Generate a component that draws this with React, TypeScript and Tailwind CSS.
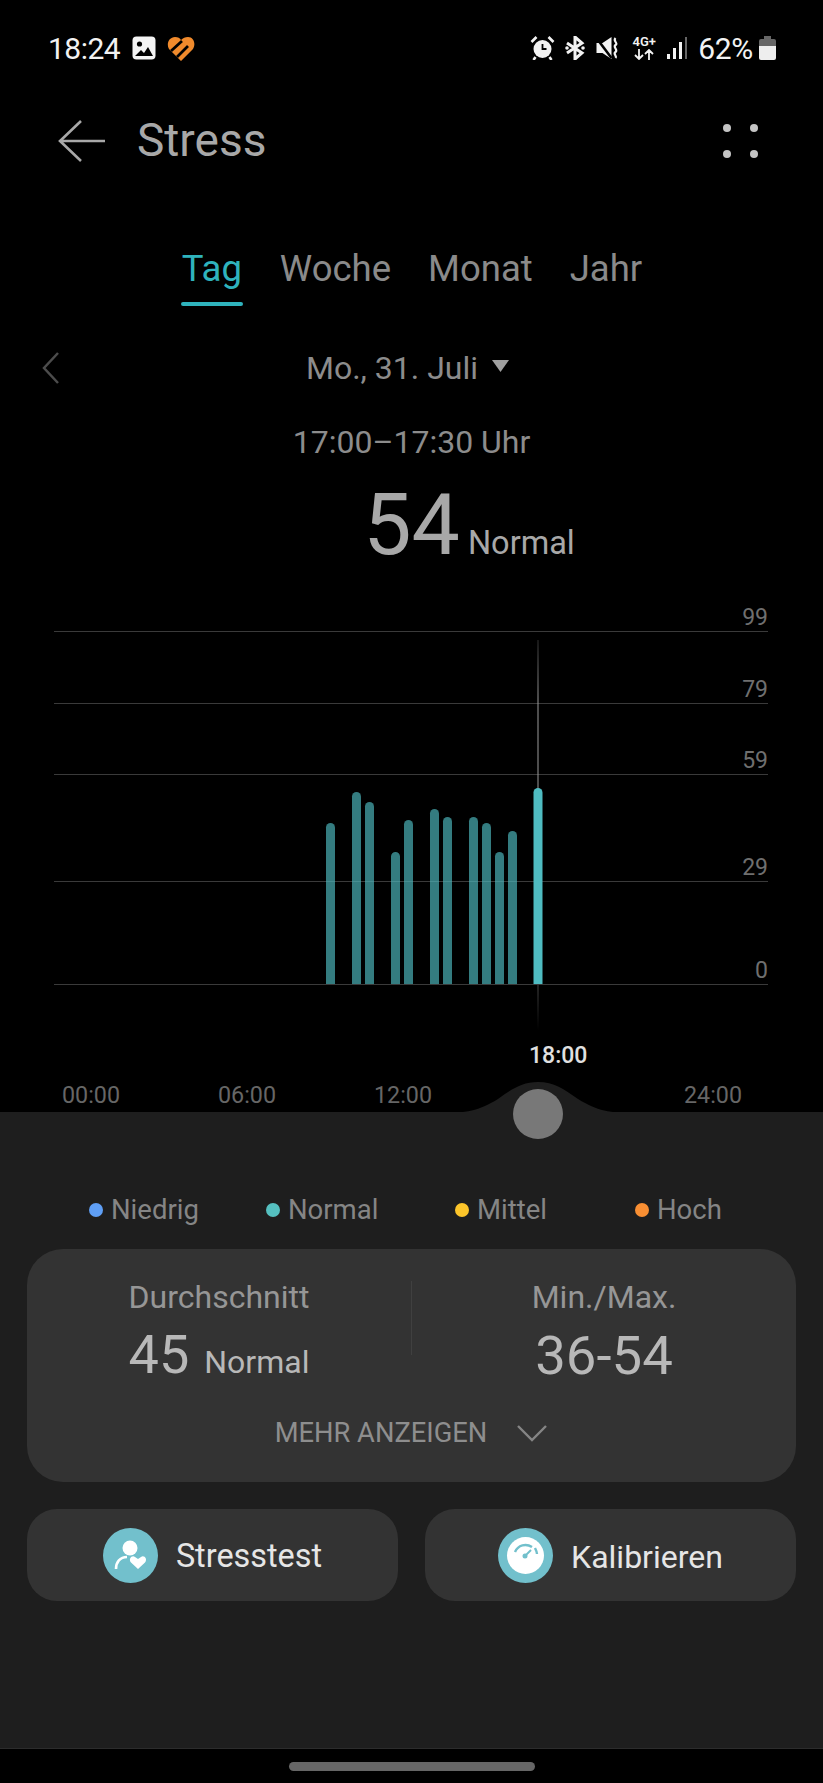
const barTops = [
  { x: 330.5, top: 823 },
  { x: 356.5, top: 792 },
  { x: 369.5, top: 802 },
  { x: 395.5, top: 852 },
  { x: 408.5, top: 820 },
  { x: 434.5, top: 809 },
  { x: 447.5, top: 817 },
  { x: 473.5, top: 817 },
  { x: 486.5, top: 823 },
  { x: 499.5, top: 852 },
  { x: 512.5, top: 831 },
];

const gridLines = [
  { y: 631, label: "99" },
  { y: 703, label: "79" },
  { y: 774, label: "59" },
  { y: 881, label: "29" },
  { y: 984, label: "0" },
];

const legend = [
  { label: "Niedrig", dot: "bg-[#5f9ff5]", cls: "left-[89px]" },
  { label: "Normal", dot: "bg-[#55c0c0]", cls: "left-[266px]" },
  { label: "Mittel", dot: "bg-[#fcc52a]", cls: "left-[455px]" },
  { label: "Hoch", dot: "bg-[#f98f33]", cls: "left-[635px]" },
];

function StatusBar() {
  return (
    <div className="flex h-[96px] items-center justify-between pl-[48px] pr-[47px] text-[30px] text-[#f2f2f2]">
      <div className="flex items-center">
        <span className="tracking-[-0.5px]">18:24</span>
        <svg width="24" height="24" viewBox="0 0 24 24" className="ml-[12px]">
          <rect x="0.5" y="0.5" width="23" height="23" rx="4" fill="#f4f4f4" />
          <circle cx="7.500" cy="8" r="2.600" fill="#000" />
          <path d="M3 20l6-6 3 3 4-6 5 9z" fill="#000" />
        </svg>
        <svg width="28" height="25" viewBox="0 0 28 25" className="ml-[11px]">
          <path
            d="M14 25L2 13C-1 8 2 1 8 1c3 0 5 1 6 3 2-2 4-3 7-3 6 0 8 7 5 12z"
            fill="#f08a2c"
          />
          <path d="M4 15L15 5M10 21L21 10" stroke="#000" strokeWidth="2.800" />
        </svg>
      </div>
      <div className="flex items-center">
        <svg width="25" height="24" viewBox="0 0 24 24" className="ml-[1px]">
          <circle cx="12" cy="13" r="9" fill="#f2f2f2" />
          <path d="M12 8v5h4" stroke="#000" strokeWidth="1.800" fill="none" />
          <path d="M1 6l5-5M23 6l-5-5M5 21l-2 3M19 21l2 3" stroke="#f2f2f2" strokeWidth="2.600" />
        </svg>
        <svg width="20" height="24" viewBox="0 0 20 24" className="ml-[10px]">
          <path d="M2 7l15 10-7 6V1l7 6L2 17" stroke="#f2f2f2" strokeWidth="3" fill="none" />
          <circle cx="2" cy="12" r="1.800" fill="#f2f2f2" />
          <circle cx="18" cy="12" r="1.800" fill="#f2f2f2" />
        </svg>
        <svg width="23" height="24" viewBox="0 0 22 24" className="ml-[11px]">
          <path d="M0 7h6l9-6v22l-9-6H0z" fill="#f2f2f2" />
          <path d="M0 2l15 20" stroke="#000" strokeWidth="2.500" />
          <path d="M19 2c-3 3 3 5 0 7s3 5 0 7 2 4 0 6" stroke="#f2f2f2" strokeWidth="2.200" fill="none" />
        </svg>
        <div className="ml-[12px] flex w-[26px] flex-col items-center text-[13px] leading-[12px] font-semibold">
          <span>4G+</span>
          <svg width="20" height="11" viewBox="0 0 20 11" className="mt-[1px]" fill="none">
            <path d="M5 0v10M1 6l4 4 4-4M15 11V1M11 5l4-4 4 4" stroke="#f2f2f2" strokeWidth="1.800" />
          </svg>
        </div>
        <svg width="20" height="22" viewBox="0 0 20 22" className="ml-[10px]">
          <rect x="0" y="17" width="3" height="5" fill="#f2f2f2" />
          <rect x="6" y="11" width="3" height="11" fill="#f2f2f2" />
          <rect x="12" y="5" width="3" height="17" fill="#f2f2f2" />
          <rect x="18" y="0" width="2" height="22" fill="#666" />
        </svg>
        <span className="ml-[11px] tracking-[-0.3px]">62%</span>
        <svg width="17" height="24" viewBox="0 0 17 24" className="ml-[6px]">
          <path d="M5 0h7v3h3a2 2 0 0 1 2 2v5H0V5a2 2 0 0 1 2-2h3z" fill="#666" />
          <path d="M0 10h17v12a2 2 0 0 1-2 2H2a2 2 0 0 1-2-2z" fill="#eee" />
        </svg>
      </div>
    </div>
  );
}

function Chart() {
  return (
    <svg width="823" height="420" viewBox="0 610 823 420" className="block">
      <defs>
        <linearGradient id="cursorFade" x1="0" x2="0" y1="984" y2="1030" gradientUnits="userSpaceOnUse">
          <stop offset="0" stopColor="#4a4a4a" />
          <stop offset="1" stopColor="#4a4a4a" stopOpacity="0" />
        </linearGradient>
        <linearGradient id="cursorTop" x1="0" x2="0" y1="640" y2="700" gradientUnits="userSpaceOnUse">
          <stop offset="0" stopColor="#9a9a9a" stopOpacity="0.3" />
          <stop offset="1" stopColor="#9a9a9a" />
        </linearGradient>
      </defs>
      {gridLines.map((g) => (
        <line key={g.y} x1="54" x2="768" y1={g.y + 0.5} y2={g.y + 0.5} stroke="#3a3a3a" />
      ))}
      <rect x="537.500" y="640" width="1" height="150" fill="url(#cursorTop)" />
      <rect x="537.500" y="985" width="1" height="45" fill="url(#cursorFade)" />
      {barTops.map((b) => (
        <path
          key={b.x}
          d={`M${b.x - 4.5} 984v${b.top + 4.5 - 984}a4.5 4.5 0 0 1 9 0V984z`}
          fill="#4fbcc2"
          fillOpacity="0.66"
        />
      ))}
      <path d="M533.5 984V792.5a4.5 4.5 0 0 1 9 0V984z" fill="#4fbcc2" />
    </svg>
  );
}

export default function App() {
  return (
    <div
      className="relative flex h-[1783px] w-[823px] flex-col overflow-hidden bg-black"
      style={{ fontFamily: "Roboto, sans-serif" }}
    >
      <StatusBar />

      {/* header */}
      <div className="flex h-[89px] items-center justify-between pl-[58px] pr-[65px]">
        <div className="flex items-center">
          <svg width="48" height="44" viewBox="0 0 48 44" fill="none">
            <path d="M23 2L2 22l21 20M2 22h45" stroke="#a8a8a8" strokeWidth="2.600" />
          </svg>
          <span className="ml-[31px] text-[46px] text-[#a8a8a8]">Stress</span>
        </div>
        <div className="grid grid-cols-2 gap-x-[19px] gap-y-[18px]">
          <span className="size-[8px] rounded-full bg-[#c4c4c4]" />
          <span className="size-[8px] rounded-full bg-[#c4c4c4]" />
          <span className="size-[8px] rounded-full bg-[#c4c4c4]" />
          <span className="size-[8px] rounded-full bg-[#c4c4c4]" />
        </div>
      </div>

      {/* tabs */}
      <div className="mt-[63px] flex h-[62px] items-start justify-center gap-[37px] text-[36.500px] leading-[42px] text-[#8a8a8a]">
        <div className="flex flex-col items-center">
          <span className="text-[#2fb3bd]">Tag</span>
          <span className="mt-[12px] h-[4px] w-[62px] rounded-full bg-[#2fb3bd]" />
        </div>
        <span>Woche</span>
        <span>Monat</span>
        <span>Jahr</span>
      </div>

      {/* date */}
      <div className="relative mt-[33px] flex h-[50px] items-center justify-center pr-[8px] text-[32px] text-[#8c8c8c]">
        <svg
          width="18"
          height="32"
          viewBox="0 0 18 32"
          fill="none"
          className="absolute left-[42px] top-[9px]"
        >
          <path d="M16 1L2 16l14 15" stroke="#4c4c4c" strokeWidth="2.500" />
        </svg>
        <span>Mo., 31. Juli</span>
        <svg width="17" height="12" viewBox="0 0 17 12" className="ml-[14px] mb-[4px]">
          <path d="M0 0h17L8.500 12z" fill="#a0a0a0" />
        </svg>
      </div>

      <div className="mt-[29px] h-[40px] text-center text-[32px] leading-[40px] text-[#8c8c8c]">
        17:00–17:30 Uhr
      </div>

      <div className="mt-[19px] flex h-[88px] items-baseline justify-center pl-[115px] text-[#a8a8a8]">
        <span className="text-[86px] leading-[88px]">54</span>
        <span className="ml-[8px] text-[32.500px]">Normal</span>
      </div>

      {/* chart */}
      <div className="absolute left-0 top-[610px]">
        <Chart />
      </div>
      {gridLines.map((g) => (
        <span
          key={g.label}
          className="absolute right-[55px] text-[23px] leading-[26px] text-[#6f6f6f]"
          style={{ top: g.y - 26 }}
        >
          {g.label}
        </span>
      ))}

      <span className="absolute left-[529px] top-[1042px] text-[23px] leading-[28px] font-medium text-[#e0e0e0]">
        18:00
      </span>
      {[
        { label: "00:00", cls: "left-[62px]" },
        { label: "06:00", cls: "left-[218px]" },
        { label: "12:00", cls: "left-[374px]" },
        { label: "24:00", cls: "left-[684px]" },
      ].map((t) => (
        <span
          key={t.label}
          className={`absolute top-[1081px] text-[23.300px] leading-[28px] text-[#666] ${t.cls}`}
        >
          {t.label}
        </span>
      ))}

      {/* bottom panel */}
      <svg
        width="200"
        height="32"
        viewBox="0 0 200 32"
        className="absolute left-[438px] top-[1081px]"
      >
        <path
          d="M0 32c30 0 40-2 60-14C74 8 84 1 100 1s26 7 40 17c20 12 30 14 60 14z"
          fill="#1e1e1e"
        />
      </svg>

      <div className="absolute inset-x-0 bottom-0 top-[1112px] flex flex-col bg-[#1e1e1e]">
        <div className="relative h-[137px] text-[27.500px] text-[#858585]">
          {legend.map((l) => (
            <div key={l.label} className={`absolute top-[82px] flex items-center ${l.cls}`}>
              <span className={`size-[14px] rounded-full ${l.dot}`} />
              <span className="ml-[8px] leading-[32px]">{l.label}</span>
            </div>
          ))}
        </div>

        <div className="mx-[27px] h-[233px] rounded-[36px] bg-[#333333]">
          <div className="flex h-[168px] items-start">
            <div className="flex w-[384px] flex-col items-center pt-[30px]">
              <span className="text-[32px] leading-[36px] text-[#969696]">Durchschnitt</span>
              <div className="mt-[9px] flex items-baseline">
                <span className="text-[54px] leading-[62px] text-[#b8b8b8]">45</span>
                <span className="ml-[15px] text-[32px] text-[#b8b8b8]">Normal</span>
              </div>
            </div>
            <div className="mt-[32px] h-[74px] w-px bg-[#404040]" />
            <div className="flex flex-1 flex-col items-center pt-[30px]">
              <span className="text-[32px] leading-[36px] text-[#969696]">Min./Max.</span>
              <span className="mt-[9px] text-[54.500px] leading-[62px] text-[#b8b8b8]">36-54</span>
            </div>
          </div>
          <div className="flex items-center justify-center text-[27.300px] leading-[32px] text-[#8e8e8e]">
            <span>MEHR ANZEIGEN</span>
            <svg width="32" height="18" viewBox="0 0 32 18" fill="none" className="ml-[29px]">
              <path d="M2 2l14 14L30 2" stroke="#858585" strokeWidth="2.400" />
            </svg>
          </div>
        </div>

        <div className="mx-[27px] mt-[27px] flex gap-[27px]">
          <div className="flex h-[92px] flex-1 items-center justify-center rounded-[30px] bg-[#333333]">
            <svg width="55" height="55" viewBox="0 0 55 55">
              <circle cx="27.500" cy="27.500" r="27.500" fill="#72c0cc" />
              <circle cx="27" cy="20" r="7.500" fill="#fff" />
              <path d="M13 41c0-7 4-12 11-12" stroke="#fff" strokeWidth="2.600" fill="none" />
              <path
                d="M35 41l-7-6.500c-3-3.500 1-8 4-5.500l3 2 3-2c3-2.500 7 2 4 5.500z"
                fill="#fff"
              />
            </svg>
            <span className="ml-[18px] pt-[3px] text-[32.400px] text-[#e6e6e6]">Stresstest</span>
          </div>
          <div className="flex h-[92px] flex-1 items-center justify-center rounded-[30px] bg-[#333333]">
            <svg width="55" height="55" viewBox="0 0 55 55">
              <circle cx="27.500" cy="27.500" r="27.500" fill="#72c0cc" />
              <circle cx="27.500" cy="27.500" r="18.500" fill="#fff" />
              <path d="M17 24c3-7 11-9 17-5M37 20c1 2 2 4 2 6" stroke="#72c0cc" strokeWidth="2.400" fill="none" />
              <circle cx="27" cy="28" r="2.500" fill="#72c0cc" />
              <path d="M27 28l6-6" stroke="#72c0cc" strokeWidth="2" />
            </svg>
            <span className="ml-[18px] pt-[3px] text-[32px] text-[#e6e6e6]">Kalibrieren</span>
          </div>
        </div>

        {/* nav bar */}
        <div className="absolute inset-x-0 bottom-0 flex h-[35px] justify-center border-t border-[#2c2c2c] bg-black pt-[13px]">
          <span className="h-[9px] w-[246px] rounded-full bg-[#666]" />
        </div>
      </div>

      {/* slider knob sits over the panel edge */}
      <span className="absolute left-[513px] top-[1089px] size-[50px] rounded-full bg-[#787878]" />
    </div>
  );
}
